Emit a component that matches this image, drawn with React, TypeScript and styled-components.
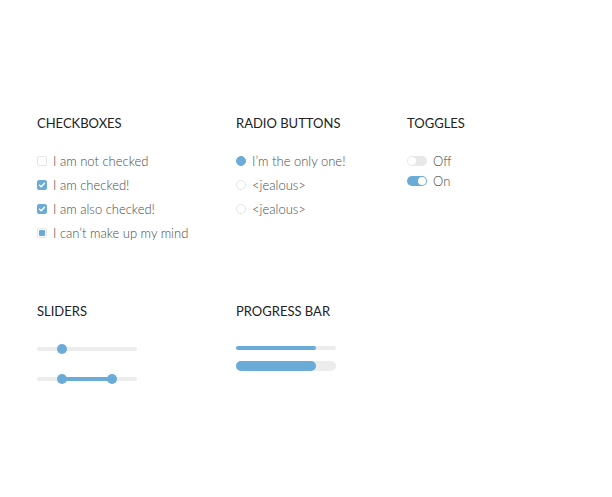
import React from "react";
import styled, { createGlobalStyle } from "styled-components";

const Global = createGlobalStyle`
  html, body { margin: 0; padding: 0; background: #fff; }
  body { font-family: Lato, "Open Sans", sans-serif; color: #555; }
`;

const BLUE = "#6aabd8";
const TRACK = "#ececec";

const Page = styled.div`
  width: 612px;
  height: 497px;
  box-sizing: border-box;
  padding: 114px 0 0 37px;
  display: flex;
  flex-direction: column;
  gap: 61px;
`;

const Row = styled.div`
  display: flex;
`;

const Section = styled.section<{ $w: number }>`
  width: ${(p) => p.$w}px;
  display: flex;
  flex-direction: column;
`;

const Heading = styled.h3`
  margin: 0 0 21px;
  font-size: 13px;
  font-weight: 400;
  color: #222;
  line-height: 18px;
`;

const List = styled.div<{ $gap: number; $top?: number }>`
  display: flex;
  flex-direction: column;
  gap: ${(p) => p.$gap}px;
  padding-top: ${(p) => p.$top ?? 0}px;
`;

const Item = styled.label`
  display: flex;
  align-items: center;
  gap: 6px;
  font-size: 13px;
  font-weight: 300;
  color: #4a4a4a;
  line-height: 16px;
  height: 16px;
`;

const Box = styled.span<{ $state: "off" | "on" | "mixed" }>`
  width: 10px;
  height: 10px;
  box-sizing: border-box;
  border-radius: 2px;
  display: inline-flex;
  align-items: center;
  justify-content: center;
  border: 1px solid ${(p) => (p.$state === "on" ? BLUE : "#e6e6e6")};
  background: ${(p) => (p.$state === "on" ? BLUE : "#fff")};
  flex: none;
`;

const Inner = styled.span`
  width: 6px;
  height: 6px;
  border-radius: 1px;
  background: ${BLUE};
`;

const Radio = styled.span<{ $on: boolean }>`
  width: 10px;
  height: 10px;
  box-sizing: border-box;
  border-radius: 50%;
  flex: none;
  border: 1px solid ${(p) => (p.$on ? BLUE : "#e6e6e6")};
  background: ${(p) => (p.$on ? BLUE : "#fff")};
`;

const Toggle = styled.span<{ $on: boolean }>`
  width: 20px;
  height: 10px;
  box-sizing: border-box;
  border-radius: 5px;
  flex: none;
  display: flex;
  align-items: center;
  padding: 1px;
  justify-content: ${(p) => (p.$on ? "flex-end" : "flex-start")};
  background: ${(p) => (p.$on ? BLUE : "#e8e8e8")};
`;

const Knob = styled.span`
  width: 8px;
  height: 8px;
  border-radius: 50%;
  background: #fff;
`;

const Track = styled.div<{ $h: number }>`
  position: relative;
  width: 100px;
  height: ${(p) => p.$h}px;
  border-radius: ${(p) => p.$h / 2}px;
  background: ${TRACK};
`;

const SliderWrap = styled.div`
  height: 10px;
  display: flex;
  align-items: center;
`;

const Fill = styled.div<{ $h: number }>`
  position: absolute;
  top: 0;
  height: ${(p) => p.$h}px;
  border-radius: ${(p) => p.$h / 2}px;
  background: ${BLUE};
`;

const Thumb = styled.div`
  position: absolute;
  top: 50%;
  width: 10px;
  height: 10px;
  margin: -5px 0 0 -5px;
  border-radius: 50%;
  background: ${BLUE};
`;

const Check = () => (
  <svg width="8" height="8" viewBox="0 0 8 8">
    <path d="M1.5 4.2 L3.2 5.8 L6.5 2.3" fill="none" stroke="#fff" strokeWidth="1.5" strokeLinecap="round" strokeLinejoin="round" />
  </svg>
);

export default function App() {
  return (
    <>
      <Global />
      <Page>
        <Row>
          <Section $w={199}>
            <Heading>CHECKBOXES</Heading>
            <List $gap={8}>
              <Item><Box $state="off" />I am not checked</Item>
              <Item><Box $state="on"><Check /></Box>I am checked!</Item>
              <Item><Box $state="on"><Check /></Box>I am also checked!</Item>
              <Item><Box $state="mixed"><Inner /></Box>I can’t make up my mind</Item>
            </List>
          </Section>
          <Section $w={171}>
            <Heading>RADIO BUTTONS</Heading>
            <List $gap={8}>
              <Item><Radio $on />I’m the only one!</Item>
              <Item><Radio $on={false} />&lt;jealous&gt;</Item>
              <Item><Radio $on={false} />&lt;jealous&gt;</Item>
            </List>
          </Section>
          <Section $w={120}>
            <Heading>TOGGLES</Heading>
            <List $gap={4}>
              <Item><Toggle $on={false}><Knob /></Toggle>Off</Item>
              <Item><Toggle $on><Knob /></Toggle>On</Item>
            </List>
          </Section>
        </Row>
        <Row>
          <Section $w={199}>
            <Heading>SLIDERS</Heading>
            <List $gap={20} $top={3}>
              <SliderWrap>
                <Track $h={4}>
                  <Thumb style={{ left: "25%" }} />
                </Track>
              </SliderWrap>
              <SliderWrap>
                <Track $h={4}>
                  <Fill $h={4} style={{ left: "25%", width: "50%" }} />
                  <Thumb style={{ left: "25%" }} />
                  <Thumb style={{ left: "75%" }} />
                </Track>
              </SliderWrap>
            </List>
          </Section>
          <Section $w={171}>
            <Heading>PROGRESS BAR</Heading>
            <List $gap={11} $top={5}>
              <Track $h={4}>
                <Fill $h={4} style={{ left: 0, width: "80%" }} />
              </Track>
              <Track $h={10}>
                <Fill $h={10} style={{ left: 0, width: "80%" }} />
              </Track>
            </List>
          </Section>
        </Row>
      </Page>
    </>
  );
}
